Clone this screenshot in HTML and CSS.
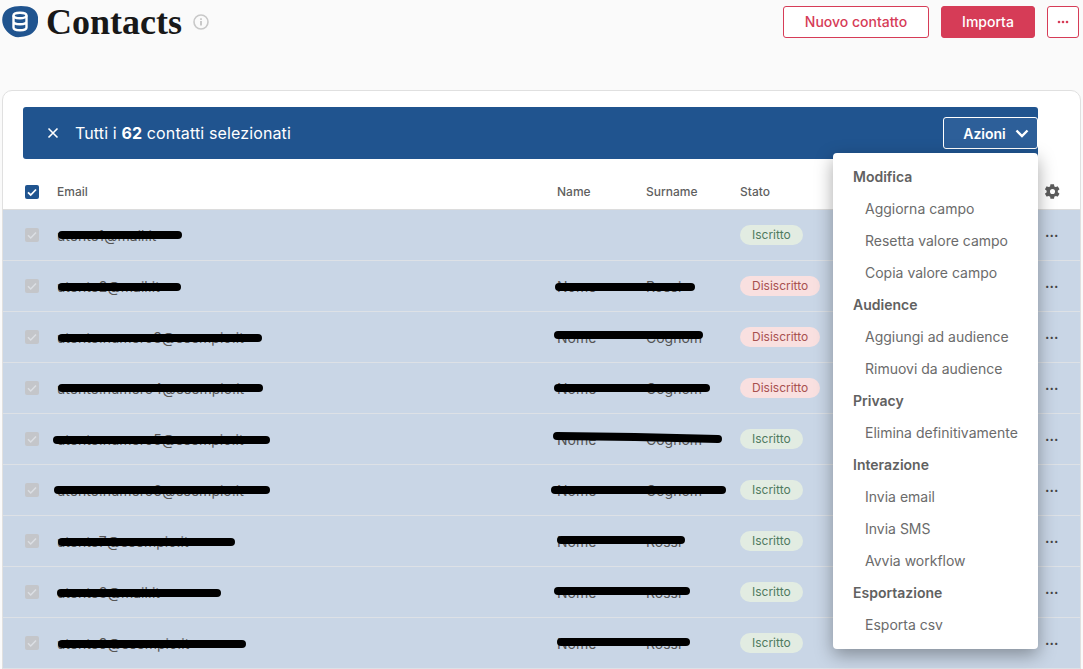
FILE: index.html
```html
<!DOCTYPE html>
<html lang="it">
<head>
<meta charset="utf-8">
<title>Contacts</title>
<link rel="stylesheet" href="styles.css">
</head>
<body>
<header class="top">
  <div class="brand">
    <svg class="logo" viewBox="0 0 36 32" width="36" height="32"><path fill="#20548f" d="M1 9C3 3 10 0 19 0c9 0 16 3 17 11 1 9-3 17-12 19-5 1-9 2-13 0C4 27-2 18 1 9z"/><g fill="none" stroke="#fff" stroke-width="2.4"><ellipse cx="18" cy="9.5" rx="6.5" ry="2.8"/><path d="M11.500 9.500v12c0 1.600 3 2.800 6.500 2.800s6.500-1.200 6.500-2.800v-12M11.500 15.500c0 1.600 3 2.800 6.500 2.800s6.500-1.200 6.500-2.800"/></g></svg>
    <h1 class="title">Contacts</h1>
    <svg class="info" viewBox="0 0 16 16" width="16" height="16"><circle cx="8" cy="8" r="7" fill="none" stroke="#c8c8c8" stroke-width="1.600"/><rect x="7.200" y="7" width="1.600" height="4.500" fill="#bdbdbd"/><rect x="7.200" y="4.300" width="1.600" height="1.600" fill="#bdbdbd"/></svg>
  </div>
  <div class="top-actions">
    <button class="btn btn-outline btn-new">Nuovo contatto</button>
    <button class="btn btn-solid btn-import">Importa</button>
    <button class="btn btn-outline btn-more"><svg viewBox="0 0 12 4" width="12" height="4"><g fill="#d63c57"><circle cx="2" cy="2" r="1.300"/><circle cx="6" cy="2" r="1.300"/><circle cx="10" cy="2" r="1.300"/></g></svg></button>
  </div>
</header>

<main class="card">
  <div class="banner">
    <div class="banner-left">
      <svg class="close" viewBox="0 0 12 12" width="12" height="12"><path d="M1.500 1.500l9 9M10.500 1.500l-9 9" stroke="#fff" stroke-width="1.600" fill="none"/></svg>
      <span>Tutti i <b>62</b> contatti selezionati</span>
    </div>
    <button class="azioni">Azioni <svg viewBox="0 0 14 9" width="14" height="9"><path d="M1.500 1.500L7 7l5.500-5.500" stroke="#fff" stroke-width="2.400" fill="none"/></svg></button>
  </div>

  <div class="table">
    <div class="row head">
      <span class="box box-on"><svg viewBox="0 0 14 14" width="14" height="14"><path d="M3 7.300l2.700 2.700L11 4.500" stroke="#fff" stroke-width="1.800" fill="none"/></svg></span>
      <span>Email</span><span>Name</span><span>Surname</span><span>Stato</span>
      <svg class="gear" viewBox="0 0 24 24" width="17" height="17"><path fill="#5c5c5c" d="M19.400 13c.1-.3.100-.7.100-1s0-.7-.1-1l2.200-1.700c.2-.2.200-.4.100-.7l-2.100-3.600c-.1-.2-.4-.3-.6-.2l-2.600 1c-.5-.4-1.100-.7-1.800-1l-.4-2.700c0-.3-.2-.4-.5-.4h-4.200c-.3 0-.5.100-.5.400l-.4 2.700c-.6.300-1.200.6-1.800 1l-2.600-1c-.2-.1-.5 0-.6.200L1.500 8.600c-.1.300-.1.500.1.700L3.800 11c-.1.300-.1.700-.1 1s0 .7.100 1l-2.200 1.700c-.2.200-.2.400-.1.700l2.100 3.600c.1.200.4.300.6.200l2.600-1c.6.400 1.200.7 1.800 1l.4 2.700c0 .3.200.4.500.4h4.200c.3 0 .5-.1.500-.4l.4-2.700c.7-.3 1.300-.6 1.800-1l2.600 1c.2.100.5 0 .6-.2l2.100-3.600c.1-.3.100-.5-.1-.7L19.400 13zM12 15.600a3.600 3.600 0 1 1 0-7.200 3.600 3.600 0 0 1 0 7.200z"/></svg>
    </div>

    <div class="row sel"><span class="box"><svg viewBox="0 0 14 14" width="14" height="14"><path d="M3 7.300l2.700 2.700L11 4.500" stroke="#dcdfe4" stroke-width="1.500" fill="none"/></svg></span><span>utente1@mail.it</span><span></span><span></span><span class="pill ok">Iscritto</span><span class="dots">•••</span></div>
    <div class="row sel"><span class="box"><svg viewBox="0 0 14 14" width="14" height="14"><path d="M3 7.300l2.700 2.700L11 4.500" stroke="#dcdfe4" stroke-width="1.500" fill="none"/></svg></span><span>utente2@mail.it</span><span>Nome</span><span>Rossi</span><span class="pill ko">Disiscritto</span><span class="dots">•••</span></div>
    <div class="row sel"><span class="box"><svg viewBox="0 0 14 14" width="14" height="14"><path d="M3 7.300l2.700 2.700L11 4.500" stroke="#dcdfe4" stroke-width="1.500" fill="none"/></svg></span><span>utente.numero3@esempio.it</span><span>Nome</span><span>Cognom</span><span class="pill ko">Disiscritto</span><span class="dots">•••</span></div>
    <div class="row sel"><span class="box"><svg viewBox="0 0 14 14" width="14" height="14"><path d="M3 7.300l2.700 2.700L11 4.500" stroke="#dcdfe4" stroke-width="1.500" fill="none"/></svg></span><span>utente.numero4@esempio.it</span><span>Nome</span><span>Cognom</span><span class="pill ko">Disiscritto</span><span class="dots">•••</span></div>
    <div class="row sel"><span class="box"><svg viewBox="0 0 14 14" width="14" height="14"><path d="M3 7.300l2.700 2.700L11 4.500" stroke="#dcdfe4" stroke-width="1.500" fill="none"/></svg></span><span>utente.numero5@esempio.it</span><span>Nome</span><span>Cognom</span><span class="pill ok">Iscritto</span><span class="dots">•••</span></div>
    <div class="row sel"><span class="box"><svg viewBox="0 0 14 14" width="14" height="14"><path d="M3 7.300l2.700 2.700L11 4.500" stroke="#dcdfe4" stroke-width="1.500" fill="none"/></svg></span><span>utente.numero6@esempio.it</span><span>Nome</span><span>Cognom</span><span class="pill ok">Iscritto</span><span class="dots">•••</span></div>
    <div class="row sel"><span class="box"><svg viewBox="0 0 14 14" width="14" height="14"><path d="M3 7.300l2.700 2.700L11 4.500" stroke="#dcdfe4" stroke-width="1.500" fill="none"/></svg></span><span>utente7@esempio.it</span><span>Nome</span><span>Rossi</span><span class="pill ok">Iscritto</span><span class="dots">•••</span></div>
    <div class="row sel"><span class="box"><svg viewBox="0 0 14 14" width="14" height="14"><path d="M3 7.300l2.700 2.700L11 4.500" stroke="#dcdfe4" stroke-width="1.500" fill="none"/></svg></span><span>utente8@mail.it</span><span>Nome</span><span>Rossi</span><span class="pill ok">Iscritto</span><span class="dots">•••</span></div>
    <div class="row sel"><span class="box"><svg viewBox="0 0 14 14" width="14" height="14"><path d="M3 7.300l2.700 2.700L11 4.500" stroke="#dcdfe4" stroke-width="1.500" fill="none"/></svg></span><span>utente9@esempio.it</span><span>Nome</span><span>Rossi</span><span class="pill ok">Iscritto</span><span class="dots">•••</span></div>
  </div>

  <nav class="menu">
    <div class="m-head">Modifica</div>
    <div class="m-item">Aggiorna campo</div>
    <div class="m-item">Resetta valore campo</div>
    <div class="m-item">Copia valore campo</div>
    <div class="m-head">Audience</div>
    <div class="m-item">Aggiungi ad audience</div>
    <div class="m-item">Rimuovi da audience</div>
    <div class="m-head">Privacy</div>
    <div class="m-item">Elimina definitivamente</div>
    <div class="m-head">Interazione</div>
    <div class="m-item">Invia email</div>
    <div class="m-item">Invia SMS</div>
    <div class="m-item">Avvia workflow</div>
    <div class="m-head">Esportazione</div>
    <div class="m-item">Esporta csv</div>
  </nav>
</main>

<svg class="marks" viewBox="0 0 1083 669" width="1083" height="669" aria-hidden="true">
  <g fill="none" stroke="#000" stroke-width="8" stroke-linecap="round">
    <path d="M62 235H178"/><path d="M62 287H177"/><path d="M62 338H258"/><path d="M62 388H259"/>
    <path d="M57 440H266"/><path d="M58 490H266"/><path d="M62 542H231"/><path d="M61 593H217"/><path d="M62 644H242"/>
    <path d="M559 287H691"/><path d="M558 335H699"/><path d="M558 388H706"/>
    <path d="M557 436L635 437L718 439"/><path d="M555 490L722 490"/><path d="M561 540H681"/><path d="M558 591H686"/><path d="M561 642H686"/>
  </g>
</svg>
</body>
</html>
```

FILE: styles.css
```css
* { box-sizing: border-box; }
html, body { margin: 0; height: 669px; overflow: hidden; }
body { position: relative; background: #fafafa; font-family: Inter, "Liberation Sans", sans-serif; color: #5f5f5f; }

.top { height: 90px; display: flex; justify-content: space-between; align-items: flex-start; padding: 6px 4px 0 2px; }
.brand { display: flex; align-items: flex-start; }
.logo { display: block; }
.title { margin: -3px 0 0 8px; font: 700 36px/38px "Liberation Serif", serif; color: #181818; }
.info { margin: 8px 0 0 11px; }

.top-actions { display: flex; gap: 12px; }
.btn { height: 32px; border-radius: 3px; font: 500 14px/28px Inter, sans-serif; border: 1px solid #d63c57; padding: 0; }
.btn-outline { background: #fff; color: #d63c57; }
.btn-solid { background: #d63c57; color: #fff; }
.btn-new { width: 146px; }
.btn-import { width: 94px; }
.btn-more { width: 32px; display: flex; align-items: center; justify-content: center; }

.card { position: relative; margin: 0 2px; height: 600px; background: #fff; border: 1px solid #e0e0e0; border-radius: 10px 10px 0 0; padding-top: 16px; overflow: hidden; }
.banner { margin: 0 42px 0 20px; height: 52px; background: #20548f; border-radius: 3px; color: #fff; display: flex; align-items: center; justify-content: space-between; padding: 0 0 0 24px; font-size: 16px; letter-spacing: 0.13px; }
.banner-left { display: flex; align-items: center; gap: 16px; }
.banner b { font-weight: 700; }
.azioni { width: 95px; height: 32px; background: #2d5f99; border: 1px solid #fff; border-radius: 3px; color: #fff; font: 600 14px Inter, sans-serif; display: flex; align-items: center; justify-content: center; gap: 9px; padding: 0 0 0 11px; }

.row { display: grid; grid-template-columns: 32px 500px 89px 94px 1fr 52px; align-items: center; height: 51px; padding-left: 22px; font-size: 14px; }
.row.head { height: 51px; padding-top: 15px; font-size: 12px; color: #5f5f5f; font-weight: 500; border-bottom: 1px solid #dcdcdc; }
.row.sel { background: #c9d6e6; border-bottom: 1px solid #dde1e6; color: #555; }
.box { width: 14px; height: 14px; border-radius: 2px; background: #c4c6ca; display: block; }
.box svg { display: block; }
.box-on { background: #20548f; }
.gear { justify-self: center; grid-column: 6; margin-left: -4px; }
.dots { grid-column: 6; font-size: 7px; letter-spacing: 0.5px; color: #444; justify-self: center; margin-left: -4px; }
.pill { justify-self: start; height: 20px; padding: 0 12px; border-radius: 10px; font-size: 12px; line-height: 20px; }
.ok { background: #e2ece2; color: #4f7a5f; }
.ko { background: #f9e0e0; color: #a8504f; }

.menu { position: absolute; top: 62px; left: 830px; width: 205px; height: 496px; padding: 8px 0; background: #fff; border-radius: 4px; box-shadow: 0 6px 18px rgba(0,0,0,0.35); font-size: 14px; color: #6b6b6b; z-index: 2; }
.m-head { height: 32px; line-height: 32px; padding-left: 20px; font-weight: 600; color: #616161; }
.m-item { height: 32px; line-height: 32px; padding-left: 32px; }

.marks { position: absolute; top: 0; left: 0; z-index: 1; pointer-events: none; }
```
